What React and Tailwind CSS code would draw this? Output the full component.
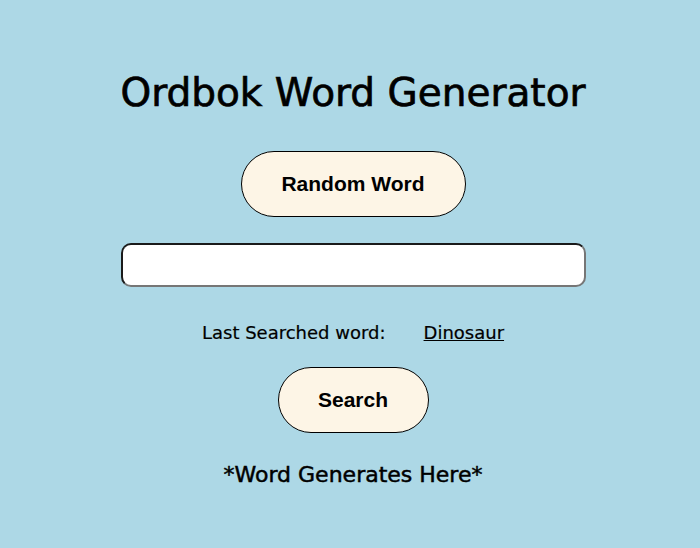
export default function App() {
  return (
    <div className="min-h-[548px] w-full bg-[#add8e6] pl-[6px] font-['DejaVu_Sans',sans-serif] text-black">
      <div className="flex flex-col items-center pt-[68px]">
        {/* heading: slightly heavier than regular */}
        <h1 className="text-[39px] leading-[50px] [-webkit-text-stroke:0.7px_black]">Ordbok Word Generator</h1>

        <button className="mt-[33px] h-[66px] w-[225px] rounded-full border border-black bg-[#fdf5e6] font-['Liberation_Sans',sans-serif] text-[21px] font-bold">
          Random Word
        </button>

        <input
          type="text"
          className="mt-[26px] h-[44px] w-[465px] rounded-[10px] border-2 border-t-[#1a1a1a] border-l-[#1a1a1a] border-b-[#767676] border-r-[#767676] bg-white px-3 outline-none"
        />

        <div className="mt-[34px] flex items-center text-[18px] leading-[24px] [-webkit-text-stroke:0.2px_black]">
          <span>Last Searched word:</span>
          <a className="ml-[38px] underline">Dinosaur</a>
        </div>

        <button className="mt-[22px] h-[66px] w-[151px] rounded-full border border-black bg-[#fdf5e6] font-['Liberation_Sans',sans-serif] text-[21px] font-bold">
          Search
        </button>

        <h2 className="mt-[27px] text-[22px] leading-[30px] [-webkit-text-stroke:0.5px_black]">*Word Generates Here*</h2>
      </div>
    </div>
  );
}
